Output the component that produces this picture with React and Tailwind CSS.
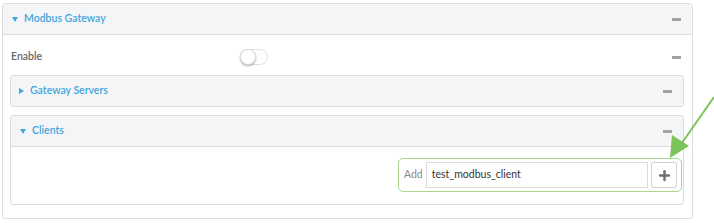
import { Plus } from "lucide-react";

const font = { fontFamily: 'Lato, "Liberation Sans", sans-serif' };

function Minus() {
  return <span className="block w-[9px] h-[3px] bg-[#a3a3a3]" />;
}

function Caret({ open }) {
  return open ? (
    <svg width="6" height="5" viewBox="0 0 6 5">
      <polygon points="0,0 6,0 3,5" fill="#43a6dc" />
    </svg>
  ) : (
    <svg width="5" height="6" viewBox="0 0 5 6">
      <polygon points="0,0 5,3 0,6" fill="#43a6dc" />
    </svg>
  );
}

function PanelHead({ open, title }) {
  return (
    <div className="flex items-center justify-between bg-[#f4f5f7] border-b border-[#dcdcdc] h-[31px] pl-[9px] pr-[11px]">
      <div className="flex items-center gap-[6px] text-[#43a6dc] text-[10.5px] font-semibold">
        <Caret open={open} />
        <span>{title}</span>
      </div>
      <Minus />
    </div>
  );
}

export default function App() {
  return (
    <div className="w-[714px] h-[223px] bg-white relative overflow-hidden" style={font}>
      <div className="pt-[3px] pl-[2px]">
        <div className="w-[691px] h-[216px] border border-[#dedede] rounded-[3px]">
          <PanelHead open title="Modbus Gateway" />

          {/* ENABLE */}
          <div className="flex items-center h-[40px] pl-[8px] pr-[11px] pt-[4px]">
            <span className="text-[10.5px] font-semibold text-[#666] w-[229px]">Enable</span>
            <span className="relative block w-[28px] h-[16px] rounded-full border border-[#e2e2e2] bg-white">
              <span className="absolute left-[-1px] top-[-1px] w-[16px] h-[16px] rounded-full bg-white border border-[#dcdcdc] shadow-[0_1px_2px_rgba(0,0,0,0.3)]" />
            </span>
            <span className="ml-auto">
              <Minus />
            </span>
          </div>

          {/* SUB PANELS */}
          <div className="pl-[7px] pr-[8px] flex flex-col gap-[8px]">
            <div className="border border-[#dcdcdc] rounded-[3px] overflow-hidden">
              <div className="flex items-center justify-between bg-[#f4f5f7] h-[30px] pl-[8px] pr-[11px]">
                <div className="flex items-center gap-[6px] text-[#43a6dc] text-[10.5px] font-semibold">
                  <Caret />
                  <span>Gateway Servers</span>
                </div>
                <Minus />
              </div>
            </div>

            <div className="border border-[#dcdcdc] rounded-[3px] overflow-hidden h-[90px]">
              <PanelHead open title="Clients" />
              <div className="flex justify-end pt-[11px] pr-[1px]">
                <div className="flex items-center h-[34px] w-[284px] border-[1.5px] border-[#a8d78d] rounded-[5px] pl-[5px] pr-[4px]">
                  <span className="text-[10.5px] text-[#8a8a8a] mr-[3px]">Add</span>
                  <div className="flex items-center h-[26px] flex-1 border border-[#dcdcdc] px-[5px] text-[10.5px] text-[#333]">
                    test_modbus_client
                  </div>
                  <div className="ml-[3px] w-[26px] h-[26px] flex items-center justify-center border border-[#d0d0d0] rounded-[3px] bg-white">
                    <Plus size={15} strokeWidth={4} color="#6f6f6f" />
                  </div>
                </div>
              </div>
            </div>
          </div>
        </div>
      </div>

      {/* callout arrow */}
      <svg className="absolute left-0 top-0 pointer-events-none" width="714" height="223">
        <line x1="714" y1="97" x2="677" y2="150" stroke="#7dc35b" strokeWidth="2" />
        <polygon points="670,158 672,135 689,146" fill="#7dc35b" />
      </svg>
    </div>
  );
}
